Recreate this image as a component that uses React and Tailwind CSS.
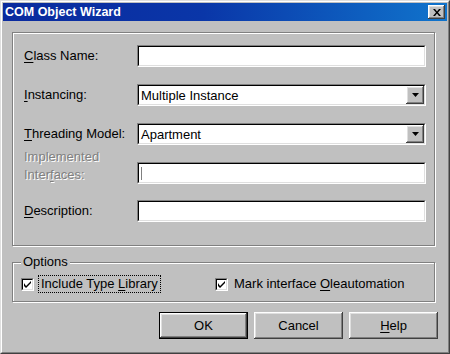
import React from 'react';

const raised =
  'shadow-[inset_-1px_-1px_0_#404040,inset_1px_1px_0_#ffffff,inset_-2px_-2px_0_#808080,inset_2px_2px_0_#dfdfdf]';

const Field = ({ children }) => (
  <div className="w-[289px] h-[22px] border border-t-[#808080] border-l-[#808080] border-b-white border-r-white">
    <div className="h-full w-full bg-white border border-t-[#000000] border-l-[#000000] border-b-[#dfdfdf] border-r-[#dfdfdf] flex items-center">
      {children}
    </div>
  </div>
);

const Combo = ({ value }) => (
  <Field>
    <span className="flex-1 pl-[2px] leading-none">{value}</span>
    <div className={`w-[18px] h-full bg-[#c0c0c0] flex items-center justify-center ${raised}`}>
      <svg width="7" height="4" viewBox="0 0 7 4">
        <path d="M0 0h7L3.5 4z" fill="#000" />
      </svg>
    </div>
  </Field>
);

const Label = ({ u, rest }) => (
  <span className="w-[114px] shrink-0 pl-px">
    <span className="underline underline-offset-2">{u}</span>
    {rest}
  </span>
);

const Check = () => (
  <div className="w-[13px] h-[13px] border border-t-[#808080] border-l-[#808080] border-b-white border-r-white">
    <div className="w-full h-full bg-white border border-t-black border-l-black border-b-[#dfdfdf] border-r-[#dfdfdf] flex items-center justify-center">
      <svg width="7" height="7" viewBox="0 0 7 7">
        <path d="M0 2v3l2 2 5-5V-0L2 5z" fill="#000" />
      </svg>
    </div>
  </div>
);

const Btn = ({ children, isDefault }) => (
  <div className={`w-[89px] h-[27px] ${isDefault ? 'border border-black' : ''}`}>
    <div className={`w-full h-full bg-[#c0c0c0] flex items-center justify-center ${raised}`}>
      {children}
    </div>
  </div>
);

export default function App() {
  return (
    <div
      className="w-[450px] h-[354px] bg-[#c0c0c0] text-black text-[13px] border border-t-[#dfdfdf] border-l-[#dfdfdf] border-b-[#404040] border-r-[#404040]"
      style={{ fontFamily: '"Liberation Sans", Arial, sans-serif' }}
    >
      <div className="h-full border border-t-white border-l-white border-b-[#808080] border-r-[#808080] p-px flex flex-col">
        {/* Title bar */}
        <div className="h-[18px] shrink-0 flex items-center justify-between bg-[linear-gradient(90deg,#0a2a9e_0%,#0a36a8_45%,#1074cc_100%)]">
          <span className="pl-[2px] text-white font-bold text-[12.5px] leading-none">COM Object Wizard</span>
          <div className={`mr-[2px] w-[17px] h-[14px] bg-[#c0c0c0] flex items-center justify-center ${raised}`}>
            <svg width="8" height="7" viewBox="0 0 8 7">
              <path d="M0 0h2l2 2.5L6 0h2L5 3.5 8 7H6L4 4.5 2 7H0l3-3.5z" fill="#000" />
            </svg>
          </div>
        </div>

        {/* Main group */}
        <div className="mt-[11px] ml-[9px] w-[423px] h-[214px] border border-[#808080] shadow-[1px_1px_0_#ffffff,inset_1px_1px_0_#ffffff] pt-[12px] pl-[10px]">
          <div className="flex items-center h-[22px]">
            <Label u="C" rest="lass Name:" />
            <Field />
          </div>
          <div className="flex items-center h-[22px] mt-[17px]">
            <Label u="I" rest="nstancing:" />
            <Combo value="Multiple Instance" />
          </div>
          <div className="flex items-center h-[22px] mt-[17px]">
            <Label u="T" rest="hreading Model:" />
            <Combo value="Apartment" />
          </div>
          <div className="flex items-start h-[22px] mt-[17px]">
            <span className="w-[114px] shrink-0 pl-px -mt-[14px] leading-[18px] text-[#808080] [text-shadow:1px_1px_0_#ffffff]">
              Implemented
              <br />
              Inter<span className="underline underline-offset-2">f</span>aces:
            </span>
            <Field>
              <span className="ml-[2px] w-px h-[13px] bg-[#808080]" />
            </Field>
          </div>
          <div className="flex items-center h-[22px] mt-[16px]">
            <Label u="D" rest="escription:" />
            <Field />
          </div>
        </div>

        {/* Options group */}
        <div className="relative mt-[16px] ml-[9px] w-[423px] h-[40px] border border-[#808080] shadow-[1px_1px_0_#ffffff,inset_1px_1px_0_#ffffff] flex items-center pl-[8px] pt-[4px]">
          <span className="absolute -top-[9px] left-[8px] px-[2px] bg-[#c0c0c0] leading-[16px]">Options</span>
          <div className="flex items-center w-[194px]">
            <Check />
            <span className="ml-[5px] px-[2px] leading-[16px] outline outline-1 outline-dotted outline-black">
              Include Type <span className="underline underline-offset-2">L</span>ibrary
            </span>
          </div>
          <div className="flex items-center">
            <Check />
            <span className="ml-[6px]">
              Mark interface <span className="underline underline-offset-2">O</span>leautomation
            </span>
          </div>
        </div>

        {/* Buttons */}
        <div className="mt-[10px] flex justify-end gap-[6px] pr-[9px]">
          <Btn isDefault>OK</Btn>
          <Btn>Cancel</Btn>
          <Btn>
            <span>
              <span className="underline underline-offset-2">H</span>elp
            </span>
          </Btn>
        </div>
      </div>
    </div>
  );
}
